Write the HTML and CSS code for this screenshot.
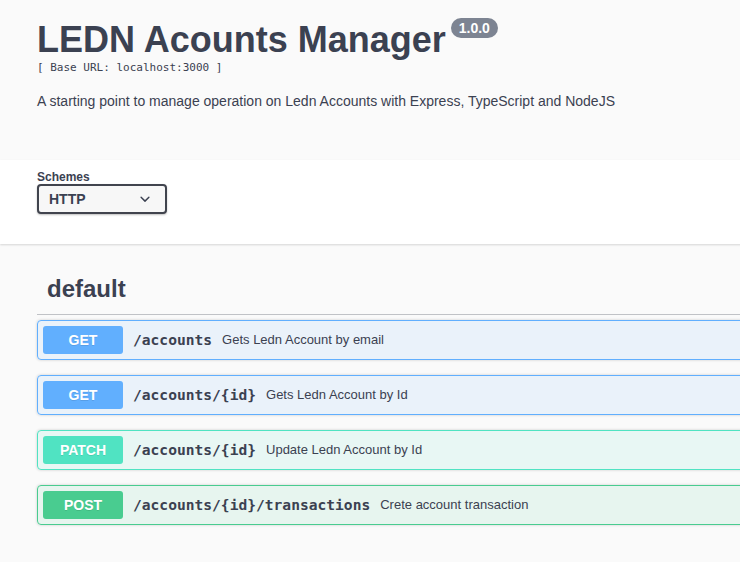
FILE: index.html
```html
<!DOCTYPE html>
<html lang="en">
<head>
<meta charset="utf-8">
<title>LEDN Acounts Manager</title>
<link rel="stylesheet" href="styles.css">
</head>
<body>
<div class="page">
  <section class="info">
    <div class="title-row">
      <h2 class="title">LEDN Acounts Manager</h2>
      <span class="version">1.0.0</span>
    </div>
    <pre class="base-url">[ Base URL: localhost:3000 ]</pre>
    <p class="description">A starting point to manage operation on Ledn Accounts with Express, TypeScript and NodeJS</p>
  </section>

  <section class="schemes">
    <div class="schemes-inner">
      <span class="schemes-label">Schemes</span>
      <div class="select">
        <span>HTTP</span>
        <svg width="20" height="16" viewBox="0 2 20 16" aria-hidden="true"><path fill="#3b4151" d="M13.418 7.859a.695.695 0 01.978 0 .68.68 0 010 .969l-3.908 3.83a.697.697 0 01-.979 0l-3.908-3.830a.68.68 0 010-.969.695.695 0 01.978 0L10 11z"/></svg>
      </div>
    </div>
  </section>

  <section class="ops">
    <h3 class="tag">default</h3>
    <div class="opblock get">
      <span class="method">GET</span>
      <span class="path">/accounts</span>
      <span class="summary">Gets Ledn Account by email</span>
    </div>
    <div class="opblock get">
      <span class="method">GET</span>
      <span class="path">/accounts/{id}</span>
      <span class="summary">Gets Ledn Account by Id</span>
    </div>
    <div class="opblock patch">
      <span class="method">PATCH</span>
      <span class="path">/accounts/{id}</span>
      <span class="summary">Update Ledn Account by Id</span>
    </div>
    <div class="opblock post">
      <span class="method">POST</span>
      <span class="path">/accounts/{id}/transactions</span>
      <span class="summary">Crete account transaction</span>
    </div>
  </section>
</div>
</body>
</html>
```

FILE: styles.css
```css
html, body {
  margin: 0;
  padding: 0;
}
body {
  background: #fafafa;
  color: #3b4151;
  font-family: "Liberation Sans", Arial, sans-serif;
  overflow: hidden;
}
.page {
  width: 1100px;
}
.info {
  padding: 19px 37px 51px;
}
.title-row {
  display: flex;
  align-items: flex-start;
}
.title {
  margin: 0;
  font-size: 36px;
  line-height: 41px;
  font-weight: 700;
  color: #3b4151;
}
.version {
  margin: -1px 0 0 5px;
  padding: 2px 8px;
  border-radius: 57px;
  background: #7d8492;
  color: #fff;
  font-size: 14px;
  line-height: 16px;
  font-weight: 700;
}
.base-url {
  margin: 1px 0 0;
  font-family: "DejaVu Sans Mono", "Liberation Mono", monospace;
  font-size: 11px;
  line-height: 13px;
  color: #3b4151;
}
.description {
  margin: 19px 0 0;
  font-size: 14px;
  line-height: 16px;
}
.schemes {
  background: #fff;
  box-shadow: 0 1px 2px 0 rgba(0, 0, 0, .15);
  padding: 10px 37px 30px;
}
.schemes-inner {
  display: flex;
  flex-direction: column;
  align-items: flex-start;
}
.schemes-label {
  font-size: 12px;
  line-height: 14px;
  font-weight: 700;
}
.select {
  box-sizing: border-box;
  width: 130px;
  display: flex;
  align-items: center;
  justify-content: space-between;
  padding: 5px 10px;
  border: 2px solid #41444e;
  border-radius: 4px;
  background: #f7f7f7;
  box-shadow: 0 1px 2px 0 rgba(0, 0, 0, .25);
  font-size: 14px;
  line-height: 16px;
  font-weight: 700;
}
.ops {
  padding: 22px 0 0 37px;
}
.tag {
  margin: 0 0 5px;
  padding: 9px 20px 11px 10px;
  font-size: 24px;
  line-height: 28px;
  font-weight: 700;
  border-bottom: 1px solid rgba(59, 65, 81, .3);
}
.opblock {
  display: flex;
  align-items: center;
  padding: 5px;
  margin: 0 0 15px;
  border: 1px solid;
  border-radius: 4px;
  box-shadow: 0 0 3px rgba(0, 0, 0, .19);
}
.method {
  min-width: 80px;
  box-sizing: border-box;
  padding: 6px 15px;
  border-radius: 3px;
  text-align: center;
  color: #fff;
  font-size: 14px;
  line-height: 16px;
  font-weight: 700;
  text-shadow: 0 1px 0 rgba(0, 0, 0, .1);
}
.path {
  padding: 0 10px;
  font-family: "DejaVu Sans Mono", "Liberation Mono", monospace;
  font-size: 14.6px;
  line-height: 16px;
  font-weight: 700;
  color: #3b4151;
  margin-top: -1px;
}
.summary {
  font-size: 13px;
  line-height: 15px;
  color: #3b4151;
  margin-top: -2px;
}
.get {
  border-color: #61affe;
  background: rgba(97, 175, 254, .1);
}
.get .method {
  background: #61affe;
}
.patch {
  border-color: #50e3c2;
  background: rgba(80, 227, 194, .1);
}
.patch .method {
  background: #50e3c2;
}
.post {
  border-color: #49cc90;
  background: rgba(73, 204, 144, .1);
}
.post .method {
  background: #49cc90;
}
```
